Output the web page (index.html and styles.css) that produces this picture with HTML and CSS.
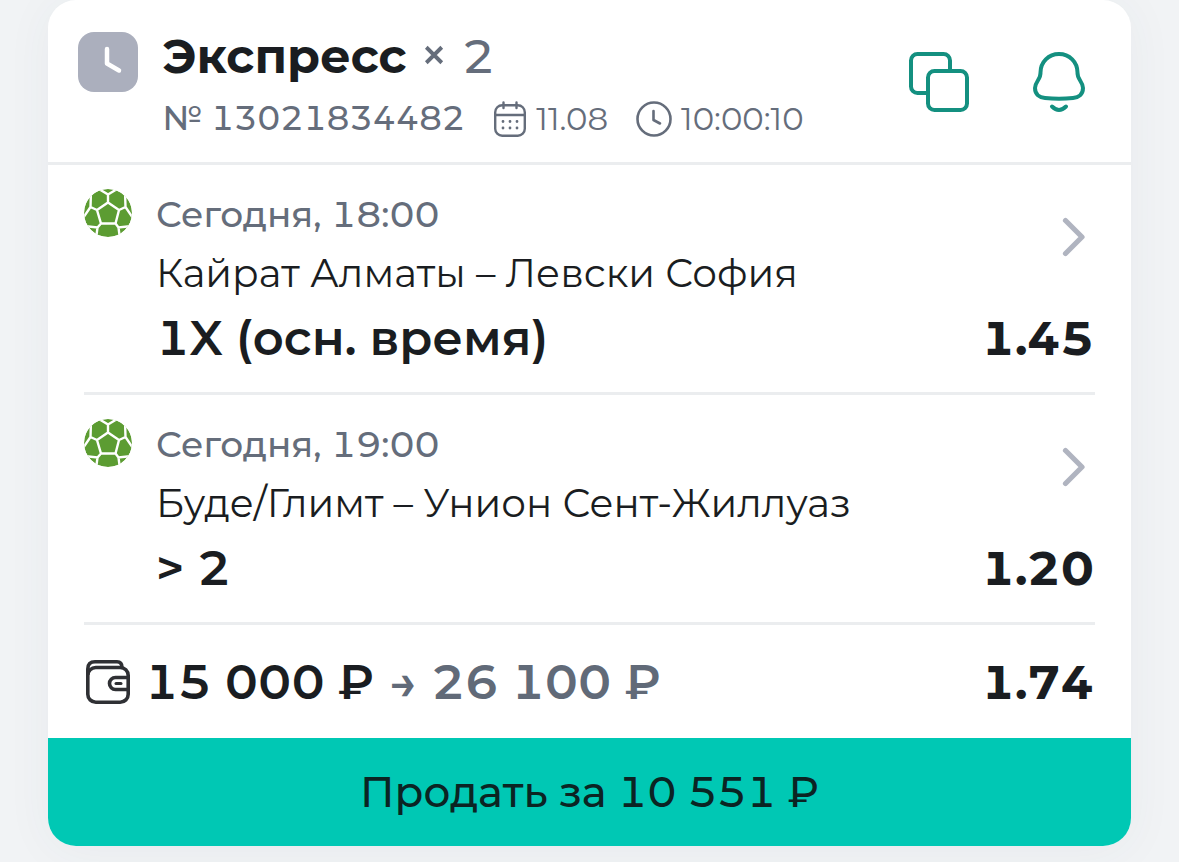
FILE: index.html
```
<!DOCTYPE html>
<html lang="ru">
<head>
<meta charset="utf-8">
<title>Экспресс</title>
<link rel="stylesheet" href="styles.css">
</head>
<body>
<svg class="defs" width="0" height="0">
  <symbol id="ball" viewBox="0 0 48 48">
    <clipPath id="round"><circle cx="24" cy="24" r="24"/></clipPath>
    <g clip-path="url(#round)">
      <circle cx="24" cy="24" r="24" fill="#5c9c32"/>
      <path d="M24 13.500 35 21 31.500 34.500H17L13 21ZM24 13.500V5.500L14-.5M24 5.500 34-.5M35 21 41.500 18 41 2M41.500 18 49 29M31.500 34.500 34.500 38.500 48 37M34.500 38.500 36 50M17 34.500 13.500 38.500 0 37M13.500 38.500 12 50M13 21 6.500 18 7 2M6.500 18-1 29" fill="none" stroke="#fff" stroke-width="2.400"/>
    </g>
  </symbol>
</svg>
<main class="card">
  <header class="head">
    <svg class="status" viewBox="0 0 60 60"><rect width="60" height="60" rx="16" fill="#abafbd"/><path d="M29 17V31.500L41 38.500" fill="none" stroke="#fff" stroke-width="4.500" stroke-linecap="round" stroke-linejoin="round"/></svg>
    <div class="info">
      <div class="title"><b class="name">Экспресс</b><span class="times">×</span><span class="count">2</span></div>
      <div class="meta">
        <span class="id">№ 13021834482</span>
        <svg class="cal" viewBox="0 0 32 36" fill="none" stroke="#656d7b" stroke-width="2.400" stroke-linecap="round"><rect x="1.200" y="4.200" width="29.600" height="30.500" rx="7"/><path d="M1.200 14H30.800M9.500 1.500V7M22.500 1.500V7"/><path d="M9 20.500h.01M16 20.500h.01M23 20.500h.01M9 27h.01M16 27h.01M23 27h.01" stroke-width="2.800"/></svg>
        <span class="day">11.08</span>
        <svg class="clock" viewBox="0 0 36 36" fill="none" stroke="#656d7b" stroke-width="2.600" stroke-linecap="round" stroke-linejoin="round"><circle cx="18" cy="18" r="16.500"/><path d="M17.500 10V19L24 22.500"/></svg>
        <span class="time">10:00:10</span>
      </div>
    </div>
    <svg class="copy" viewBox="0 0 60 60" fill="none" stroke="#149080" stroke-width="4"><path d="M17 41H8.500A6.500 6.500 0 0 1 2 34.500V8.500A6.500 6.500 0 0 1 8.500 2H34.500A6.500 6.500 0 0 1 41 8.500V18"/><rect x="19" y="19" width="39" height="39" rx="6.500"/></svg>
    <svg class="bell" viewBox="0 0 52 60" fill="none" stroke="#149080" stroke-width="4" stroke-linecap="round"><path d="M26 2C15.500 2 7.500 10 7.500 20.500C8 27.500 2 29.500 2 36C2 42.500 6.500 45.500 12 46Q26 47.500 40 46C45.500 45.500 50 42.500 50 36C50 29.500 44 27.500 44.500 20.500C44.500 10 36.500 2 26 2Z"/><path d="M19 54.500Q26 61.500 33 54.500"/></svg>
  </header>
  <div class="body">
    <section class="event">
      <svg class="ball"><use href="#ball"/></svg>
      <div class="desc">
        <div class="date">Сегодня, 18:00</div>
        <div class="teams">Кайрат Алматы – Левски София</div>
        <div class="bet">1X (осн. время)</div>
      </div>
      <div class="side"><svg class="chev" viewBox="0 0 24 40"><path d="M3.500 3.500 20 20 3.500 36.500" fill="none" stroke="#b0b4c0" stroke-width="5.200" stroke-linecap="round" stroke-linejoin="round"/></svg><span class="odd">1.45</span></div>
    </section>
    <section class="event">
      <svg class="ball"><use href="#ball"/></svg>
      <div class="desc">
        <div class="date">Сегодня, 19:00</div>
        <div class="teams">Буде/Глимт – Унион Сент-Жиллуаз</div>
        <div class="bet">&gt; 2</div>
      </div>
      <div class="side"><svg class="chev" viewBox="0 0 24 40"><path d="M3.500 3.500 20 20 3.500 36.500" fill="none" stroke="#b0b4c0" stroke-width="5.200" stroke-linecap="round" stroke-linejoin="round"/></svg><span class="odd">1.20</span></div>
    </section>
    <section class="sum">
      <svg class="wallet" viewBox="0 0 44 44" fill="none" stroke="#2f3034" stroke-width="3.600" stroke-linejoin="round"><rect x="1.800" y="7.500" width="40.400" height="34.700" rx="8"/><path d="M1.800 15V9Q1.800 1.800 9 1.800H31Q36 1.800 36 7.500M42 17.500H29.500A6 6 0 0 0 29.500 29.500H42"/><path d="M30 23.500H35" stroke-width="3" stroke-linecap="round"/></svg>
      <span class="stake">15 000 ₽</span>
      <span class="arrow">→</span>
      <span class="win">26 100 ₽</span>
      <span class="odd">1.74</span>
    </section>
  </div>
  <button class="sell">Продать за 10 551 ₽</button>
</main>
</body>
</html>
```
FILE: styles.css
```
* { box-sizing: border-box; }
body { margin: 0; height: 862px; overflow: hidden; background: #f1f3f5; font-family: Montserrat, Inter, "Noto Sans", sans-serif; font-variant-numeric: tabular-nums; color: #1a1d21; }
.defs { position: absolute; }
svg { display: block; flex: none; }
span, b { white-space: pre; }
.card { width: 1083px; height: 846px; margin: 0 0 0 48px; border-radius: 28px; background: #fff; overflow: hidden; box-shadow: 0 4px 48px rgba(60, 75, 95, .05); }
.head { display: flex; height: 165px; padding: 0 46px 0 30px; border-bottom: 3px solid #ebedef; }
.status { width: 60px; height: 60px; margin-top: 32px; }
.info { flex: 1; margin-left: 24.5px; padding-top: 26px; color: #656d7b; }
.title { display: flex; height: 60px; line-height: 60px; font-size: 47.6px; }
.name { font-weight: 700; color: #1a1d21; }
.times { font-size: 49px; font-weight: 500; margin-left: 13px; line-height: 58px; }
.count { font-weight: 500; font-size: 47px; margin-left: 14px; line-height: 61px; }
.meta { display: flex; height: 65px; line-height: 65px; font-size: 33px; align-items: center; }
.cal { width: 32px; height: 36px; margin-left: 29px; }
.clock { width: 36px; height: 36px; margin-left: 28px; }
.id { font-weight: 500; }
.day, .time { font-size: 32.3px; font-weight: 400; font-variant-numeric: normal; margin-left: 10px; }
.time { margin-left: 9px; }
.copy { width: 60px; height: 60px; margin-top: 52px; }
.bell { width: 52px; height: 60px; margin: 52px 0 0 64px; }
.body { padding: 0 36px; }
.event { display: flex; height: 230px; padding-top: 19px; border-bottom: 3px solid #ebedef; }
.ball { width: 48px; height: 48px; margin-top: 5px; }
.desc { flex: 1; margin-left: 24px; }
.date { height: 59px; line-height: 60px; font-size: 35.9px; font-weight: 500; color: #656d7b; }
.teams { height: 60px; line-height: 61px; font-size: 38.9px; }
.bet { height: 71px; line-height: 71px; font-size: 48px; font-weight: 600; }
.side { display: flex; flex-direction: column; align-items: flex-end; }
.chev { width: 24px; height: 40px; margin: 33px 9px 46px 0; }
.odd { font-size: 47.6px; font-weight: 700; line-height: 71px; margin-right: 1px; }
.sum { display: flex; height: 113px; align-items: center; padding-top: 1px; }
.wallet { width: 44px; height: 44px; margin-left: 2px; }
.stake, .win, .arrow { font-size: 47.6px; font-weight: 600; }
.stake { margin-left: 15px; }
.win, .arrow { color: #616a78; }
.arrow { margin: 0 14px 0 15px; }
.sum .odd { margin-left: auto; }
.sell { display: block; width: 100%; height: 108px; border: 0; padding: 0; background: #00c8b4; color: #0b2423; font: 500 42px/108px Montserrat, Inter, sans-serif; font-variant-numeric: tabular-nums; }
```
